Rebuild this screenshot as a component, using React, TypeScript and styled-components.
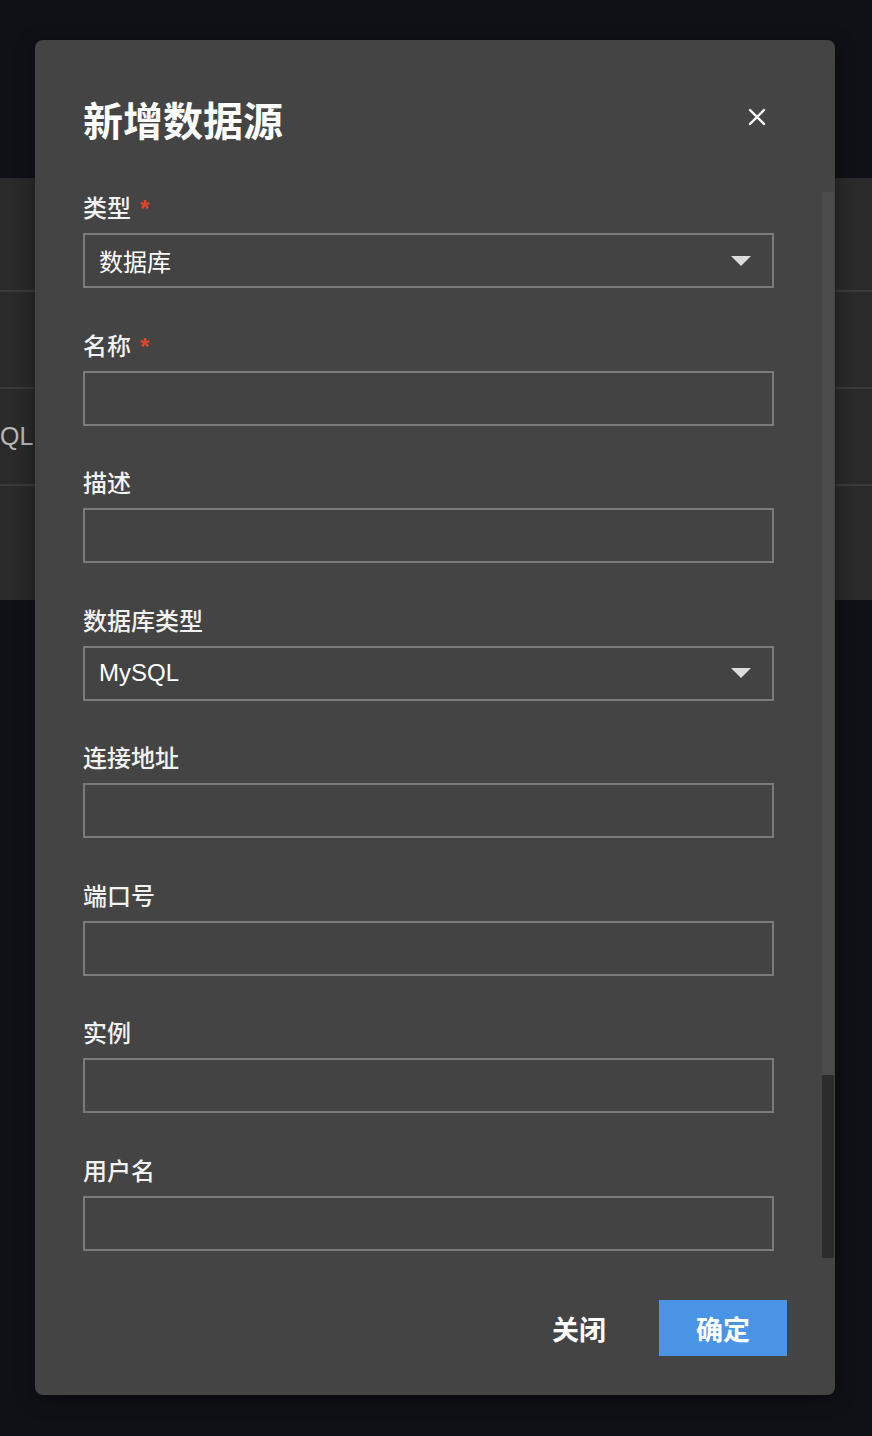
import React from 'react';
import styled, { createGlobalStyle } from 'styled-components';

const GlobalStyle = createGlobalStyle`
  html, body {
    margin: 0;
    padding: 0;
    background: #101116;
    font-family: "Noto Sans CJK SC", "Noto Sans", sans-serif;
  }
  * { box-sizing: border-box; }
`;

interface Field {
  label: string;
  required?: boolean;
  value?: string;
  select?: boolean;
}

const fields: Field[] = [
  { label: '类型', required: true, value: '数据库', select: true },
  { label: '名称', required: true },
  { label: '描述' },
  { label: '数据库类型', value: 'MySQL', select: true },
  { label: '连接地址' },
  { label: '端口号' },
  { label: '实例' },
  { label: '用户名' },
];

const App: React.FC = () => {
  return (
    <Page>
      <GlobalStyle />
      <TopBar />
      <Table>
        <Row />
        <Row />
        <Row>
          <RowText>QL</RowText>
        </Row>
        <Row />
      </Table>

      <Modal>
        <Header>
          <Title>新增数据源</Title>
          <CloseButton aria-label="close">
            <svg width="18" height="18" viewBox="0 0 18 18">
              <path d="M2 2 L16 16 M16 2 L2 16" stroke="#fff" strokeWidth="2.4" strokeLinecap="round" />
            </svg>
          </CloseButton>
        </Header>

        <Body>
          <Content>
            {fields.map((f) => (
              <FormItem key={f.label}>
                <Label>
                  {f.label}
                  {f.required && <Star>*</Star>}
                </Label>
                <Input>
                  <Value>{f.value}</Value>
                  {f.select && (
                    <svg width="20" height="10" viewBox="0 0 20 10">
                      <path d="M0 0 H20 L10 10 Z" fill="#dcdcdc" />
                    </svg>
                  )}
                </Input>
              </FormItem>
            ))}
          </Content>
          <Scrollbar>
            <Thumb />
          </Scrollbar>
        </Body>

        <Footer>
          <TextButton>关闭</TextButton>
          <PrimaryButton>确定</PrimaryButton>
        </Footer>
      </Modal>
    </Page>
  );
};

const Page = styled.div`
  position: relative;
  width: 872px;
  height: 1436px;
  overflow: hidden;
  background: #101116;
`;

const TopBar = styled.div`
  height: 178px;
`;

const Table = styled.div`
  background: #2a2a2a;
`;

const Row = styled.div`
  height: 97px;
  display: flex;
  align-items: center;
  border-bottom: 2px solid #3a3a3a;

  &:first-child {
    height: 114px;
  }

  &:last-child {
    height: 114px;
    border-bottom: none;
  }
`;

const RowText = styled.span`
  font-family: "Liberation Sans", Arial, sans-serif;
  font-size: 25px;
  color: #b8b8b8;
`;

const Modal = styled.div`
  position: absolute;
  top: 40px;
  left: 35px;
  width: 800px;
  height: 1355px;
  background: #444444;
  border-radius: 8px;
  display: flex;
  flex-direction: column;
  box-shadow: 0 4px 20px rgba(0, 0, 0, 0.4);
`;

const Header = styled.div`
  display: flex;
  align-items: center;
  justify-content: space-between;
  height: 150px;
  padding: 8px 69px 0 48px;
`;

const Title = styled.h1`
  margin: 0;
  font-size: 40px;
  font-weight: 700;
  line-height: 48px;
  color: #ffffff;
`;

const CloseButton = styled.button`
  display: flex;
  padding: 0;
  margin-top: -4px;
  border: none;
  background: none;
  cursor: pointer;
`;

const Body = styled.div`
  display: flex;
  height: 1070px;
  padding-right: 1px;
`;

const Content = styled.div`
  flex: 1;
  padding: 2px 48px 0 48px;
  overflow: hidden;
`;

const FormItem = styled.div`
  margin-bottom: 41.5px;
`;

const Label = styled.div`
  display: flex;
  align-items: flex-start;
  height: 30px;
  font-size: 24px;
  font-weight: 500;
  line-height: 30px;
  color: #f2f2f2;
  margin-bottom: 11px;
`;

const Star = styled.span`
  margin-left: 9px;
  padding-top: 2px;
  font-family: "Liberation Sans", Arial, sans-serif;
  font-size: 24px;
  line-height: 30px;
  font-weight: 700;
  color: #e5432d;
`;

const Input = styled.div`
  height: 55px;
  border: 2px solid #7b7b7b;
  display: flex;
  align-items: center;
  justify-content: space-between;
  padding: 0 21px 0 14px;
  background: #434343;
`;

const Value = styled.span`
  font-family: "Liberation Sans", "Noto Sans CJK SC", sans-serif;
  font-size: 24px;
  color: #ffffff;
`;

const Scrollbar = styled.div`
  width: 12px;
  margin-top: 2px;
  margin-bottom: 2px;
  background: #4b4b4b;
  display: flex;
  flex-direction: column;
  justify-content: flex-end;
`;

const Thumb = styled.div`
  height: 183px;
  background: #2c2c2c;
`;

const Footer = styled.div`
  flex: 1;
  display: flex;
  justify-content: flex-end;
  align-items: flex-start;
  gap: 16px;
  padding: 40px 48px 0 0;
`;

const TextButton = styled.button`
  width: 128px;
  height: 56px;
  border: none;
  background: none;
  font-family: inherit;
  font-size: 27px;
  font-weight: 700;
  color: #ffffff;
  cursor: pointer;
`;

const PrimaryButton = styled(TextButton)`
  background: #4a94e6;
`;

export default App;
